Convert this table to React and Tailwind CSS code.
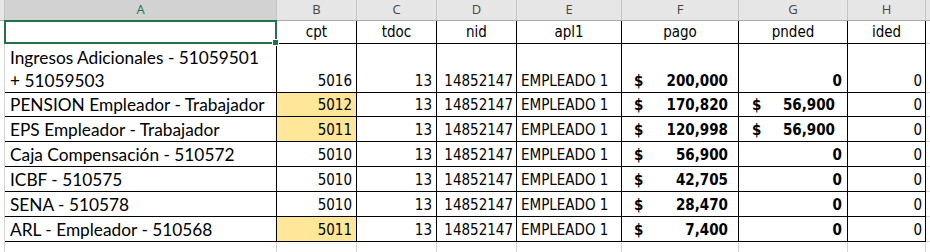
import React from 'react';

const grid = 'grid grid-cols-[5px_272px_80px_80px_80px_105px_117px_109px_78px_4px]';
const calibri = "font-['Lato','Carlito',sans-serif] text-[17.3px]";
const tahoma = "font-['DejaVu_Sans_Condensed','DejaVu_Sans',sans-serif] text-[15px] [font-stretch:condensed]";

const letters = ['A', 'B', 'C', 'D', 'E', 'F', 'G', 'H'];
const labels = ['cpt', 'tdoc', 'nid', 'apl1', 'pago', 'pnded', 'ided'];

const rows = [
  { name: ['Ingresos Adicionales - 51059501', '+ 51059503'], cpt: '5016', pago: '200,000', pnded: null },
  { name: ['PENSION Empleador - Trabajador'], cpt: '5012', hl: true, pago: '170,820', pnded: '56,900' },
  { name: ['EPS Empleador - Trabajador'], cpt: '5011', hl: true, pago: '120,998', pnded: '56,900' },
  { name: ['Caja Compensación - 510572'], cpt: '5010', pago: '56,900', pnded: null },
  { name: ['ICBF - 510575'], cpt: '5010', pago: '42,705', pnded: null },
  { name: ['SENA - 510578'], cpt: '5010', pago: '28,470', pnded: null },
  { name: ['ARL - Empleador - 510568'], cpt: '5011', hl: true, pago: '7,400', pnded: null },
];

const heights = ['h-[49px]', 'h-[24px]', 'h-[25px]', 'h-[25px]', 'h-[25px]', 'h-[25px]', 'h-[25px]'];

const cell = 'border-r border-b border-black flex items-end overflow-hidden whitespace-nowrap';

const Money = ({ value }) => (
  <div className={`${cell} ${tahoma} font-bold justify-between pl-[12px] pr-[10px]`}>
    <span>$</span>
    <span>{value}</span>
  </div>
);

const App = () => {
  return (
    <div className="w-[930px] h-[252px] bg-white overflow-hidden text-black">
      {/* column letters */}
      <div className={`${grid} h-[21px] bg-[#e6e6e6] border-b border-[#ababab]`}>
        <div className="border-r border-[#c4c4c4]" />
        {letters.map((l) => (
          <div
            key={l}
            className={`flex items-center justify-center border-r border-[#c4c4c4] font-['Open_Sans',sans-serif] text-[13px] ${
              l === 'A' ? 'bg-[#d2d2d2] text-[#217346]' : 'text-[#444]'
            }`}
          >
            {l}
          </div>
        ))}
        <div />
      </div>

      {/* header labels */}
      <div className={`${grid} h-[23px]`}>
        <div className="border-r border-[#d4d4d4]" />
        <div className="relative border-2 border-[#217346] -ml-[1px] -mt-[1px]">
          <div className="absolute -right-[4px] -bottom-[4px] w-[7px] h-[7px] bg-[#217346] border border-white" />
        </div>
        {labels.map((t) => (
          <div key={t} className={`${cell} ${tahoma} justify-center`}>
            {t}
          </div>
        ))}
        <div className="border-b border-[#d4d4d4]" />
      </div>

      {rows.map((r, i) => (
        <div key={i} className={`${grid} ${heights[i]}`}>
          <div className="border-r border-[#d4d4d4]" />
          <div className={`border-r border-b border-black flex flex-col justify-end pl-[5px] ${calibri} leading-[23px] whitespace-nowrap`}>
            {r.name.map((n) => (
              <span key={n}>{n}</span>
            ))}
          </div>
          <div className={`${cell} ${tahoma} justify-end pr-[4px] ${r.hl ? 'bg-[#ffe699]' : ''}`}>{r.cpt}</div>
          <div className={`${cell} ${tahoma} justify-end pr-[4px]`}>13</div>
          <div className={`${cell} ${tahoma} justify-end pr-[3px]`}>14852147</div>
          <div className={`${cell} ${tahoma} pl-[4px]`}>EMPLEADO 1</div>
          <Money value={r.pago} />
          {r.pnded ? (
            <div className={`${cell} ${tahoma} font-bold justify-between pl-[13px] pr-[12px]`}>
              <span>$</span>
              <span>{r.pnded}</span>
            </div>
          ) : (
            <div className={`${cell} ${tahoma} font-bold justify-end pr-[5px]`}>0</div>
          )}
          <div className={`${cell} ${tahoma} justify-end pr-[3px]`}>0</div>
          <div className="border-b border-[#d4d4d4]" />
        </div>
      ))}

      {/* trailing empty row */}
      <div className={`${grid} h-[12px]`}>
        <div className="border-r border-[#d4d4d4]" />
        {letters.map((l) => (
          <div key={l} className="border-r border-[#d4d4d4]" />
        ))}
        <div />
      </div>
    </div>
  );
};

export default App;
